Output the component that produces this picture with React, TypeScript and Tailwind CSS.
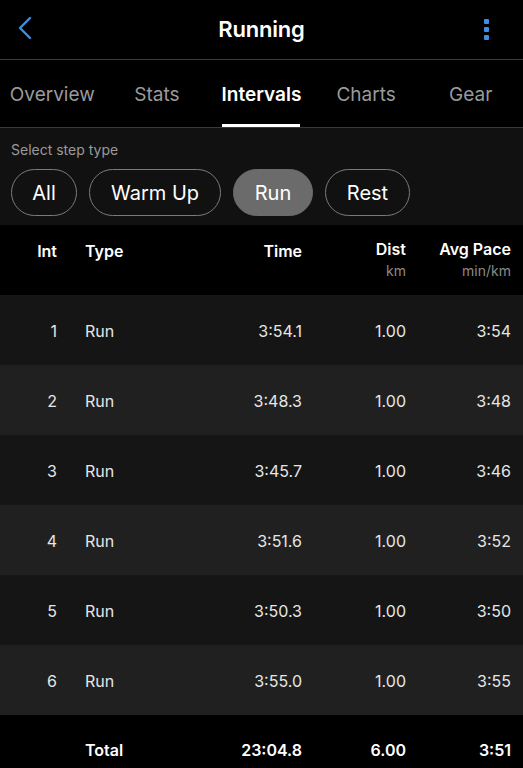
import React from "react";

const rows = [
  { n: 1, time: "3:54.1", dist: "1.00", pace: "3:54" },
  { n: 2, time: "3:48.3", dist: "1.00", pace: "3:48" },
  { n: 3, time: "3:45.7", dist: "1.00", pace: "3:46" },
  { n: 4, time: "3:51.6", dist: "1.00", pace: "3:52" },
  { n: 5, time: "3:50.3", dist: "1.00", pace: "3:50" },
  { n: 6, time: "3:55.0", dist: "1.00", pace: "3:55" },
];

const tabs = ["Overview", "Stats", "Intervals", "Charts", "Gear"];
const pills = [
  { label: "All", w: "w-[66px]" },
  { label: "Warm Up", w: "w-[132px]" },
  { label: "Run", w: "w-[80px]" },
  { label: "Rest", w: "w-[85px]" },
];

export default function App() {
  return (
    <div className="min-h-[768px] w-[523px] bg-black text-white font-['Inter','Liberation_Sans',sans-serif] overflow-hidden">
      {/* header */}
      <div className="relative flex h-[60px] items-center justify-center border-b border-[#3a3a3a]">
        <svg className="absolute left-[17px] top-[16px]" width="16" height="24" viewBox="0 0 16 24">
          <path d="M13 2 L3 12 L13 22" fill="none" stroke="#3f8fe0" strokeWidth="2.4" strokeLinecap="round" strokeLinejoin="round" />
        </svg>
        <h1 className="text-[22px] font-semibold tracking-[-0.2px]">Running</h1>
        <div className="absolute right-[34px] top-[19px] flex flex-col gap-[3px]">
          <span className="block h-[5px] w-[5px] bg-[#3f8fe0] rounded-[1px]" />
          <span className="block h-[5px] w-[5px] bg-[#3f8fe0] rounded-[1px]" />
          <span className="block h-[5px] w-[5px] bg-[#3f8fe0] rounded-[1px]" />
        </div>
      </div>

      {/* tabs */}
      <div className="grid h-[68px] grid-cols-5 border-b border-[#3a3a3a]">
        {tabs.map((t) => (
          <div key={t} className="relative flex items-center justify-center pt-[4px]">
            <span className={t === "Intervals" ? "text-[19px] font-semibold text-white" : "text-[19px] text-[#9a9a9a]"}>{t}</span>
            {t === "Intervals" && (
              <span className="absolute bottom-0 left-1/2 h-[3px] w-[78px] -translate-x-1/2 bg-white" />
            )}
          </div>
        ))}
      </div>

      {/* step type */}
      <div className="bg-[#111111] px-[11px] pt-[11px] pb-[9px]">
        <p className="text-[14px] text-[#9a9a9a]">Select step type</p>
        <div className="mt-[9px] flex gap-[12px]">
          {pills.map((p) => (
            <div
              key={p.label}
              className={`flex h-[47px] items-center justify-center rounded-full border text-[20px] ${p.w} ${
                p.label === "Run" ? "border-[#6b6b6b] bg-[#6b6b6b]" : "border-[#7a7a7a]"
              }`}
            >
              {p.label}
            </div>
          ))}
        </div>
      </div>

      {/* table header */}
      <div className="grid h-[70px] grid-cols-[57px_1fr_100px_104px_105px] pr-[12px] pt-[14px] text-[16px] font-semibold">
        <div className="text-right">Int</div>
        <div className="pl-[28px]">Type</div>
        <div className="text-right">Time</div>
        <div className="text-right leading-[21px]">
          Dist
          <div className="text-[14px] font-normal text-[#8a8a8a]">km</div>
        </div>
        <div className="text-right leading-[21px]">
          Avg Pace
          <div className="text-[14px] font-normal text-[#8a8a8a]">min/km</div>
        </div>
      </div>

      {rows.map((r, i) => (
        <div
          key={r.n}
          className={`grid h-[70px] grid-cols-[57px_1fr_100px_104px_105px] items-center pr-[12px] pt-[1px] text-[16px] text-[#e6e6e6] ${
            i % 2 === 0 ? "bg-[#151515]" : "bg-[#202020]"
          }`}
        >
          <div className="text-right">{r.n}</div>
          <div className="pl-[28px]">Run</div>
          <div className="text-right">{r.time}</div>
          <div className="text-right">{r.dist}</div>
          <div className="text-right">{r.pace}</div>
        </div>
      ))}

      {/* total */}
      <div className="grid h-[70px] grid-cols-[57px_1fr_100px_104px_105px] items-center pr-[12px] text-[16px] font-semibold">
        <div />
        <div className="pl-[28px]">Total</div>
        <div className="text-right">23:04.8</div>
        <div className="text-right">6.00</div>
        <div className="text-right">3:51</div>
      </div>
    </div>
  );
}
